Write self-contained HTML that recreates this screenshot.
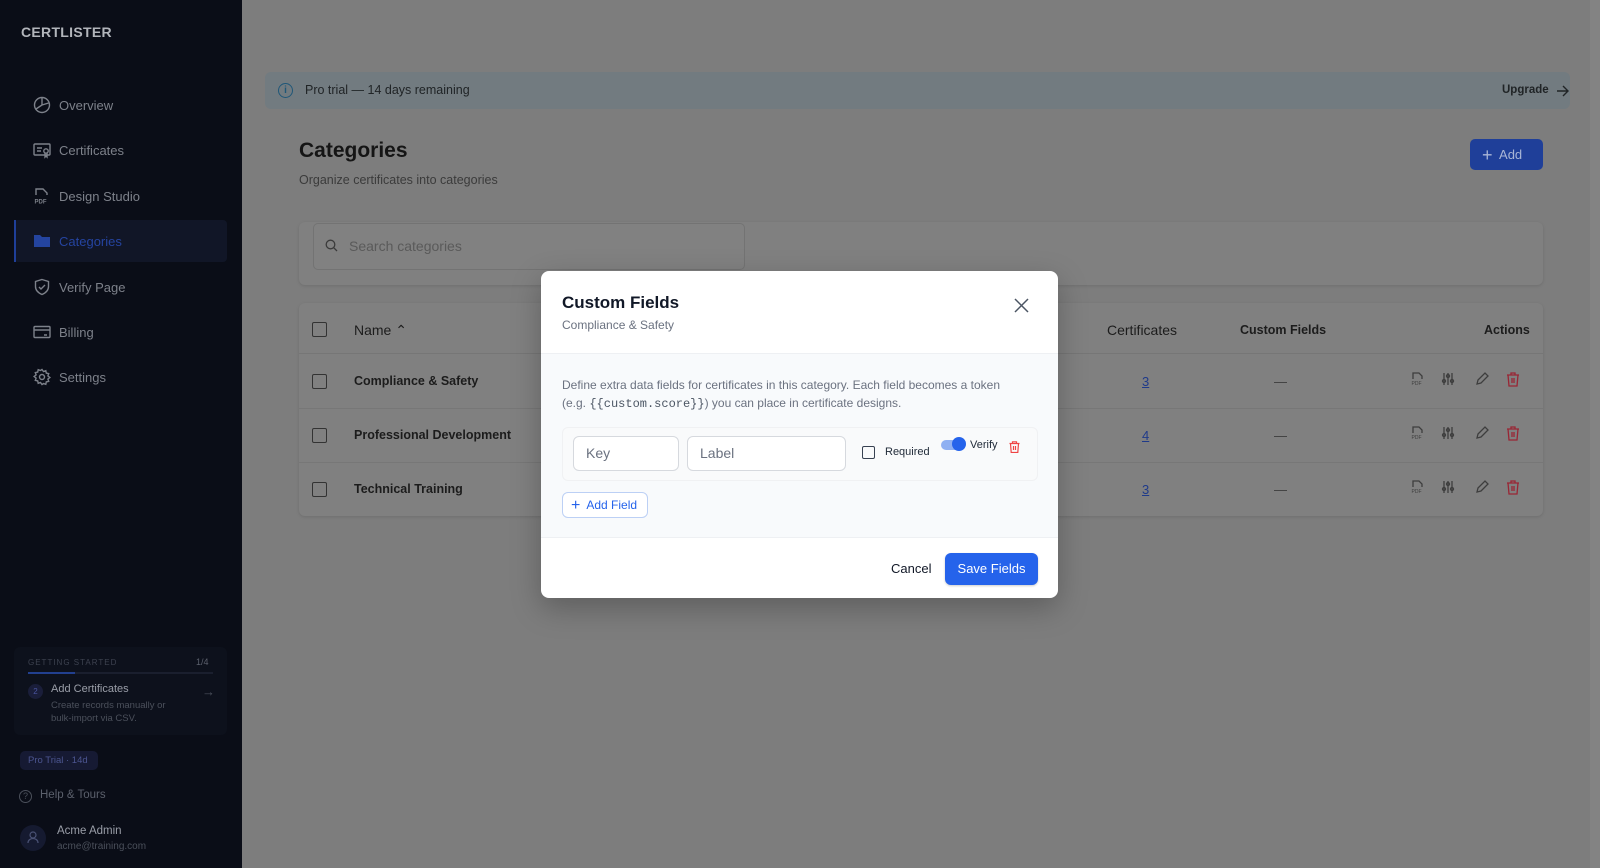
<!DOCTYPE html>
<html><head><meta charset="utf-8">
<style>
*{box-sizing:border-box;margin:0;padding:0}
body{width:1600px;height:868px;overflow:hidden;font-family:"Liberation Sans",Arial,sans-serif;background:#7d7d7d;position:relative}
.abs{position:absolute}
.sb{left:0;top:0;width:242px;height:868px;background:#0a0d17}
.nav{position:absolute;left:33px;height:20px;display:flex;align-items:center;color:#7d818a;font-size:13px}
.nav svg{width:18px;height:18px;margin-right:8px;stroke:#7d818a;fill:none;stroke-width:1.4}
.t{white-space:nowrap}
.cb{position:absolute;width:15px;height:15px;border:1.5px solid #333;border-radius:2px}
</style></head><body>
<div class="abs sb"></div>
<div class="abs t" style="left:21px;top:24px;font-size:14px;font-weight:bold;color:#b2b5bb;letter-spacing:.3px">CERTLISTER</div>

<div class="abs" style="left:14px;top:220px;width:213px;height:42px;background:#111627;border-radius:4px"></div>
<div class="abs" style="left:14px;top:220px;width:2px;height:42px;background:#1f3f99"></div>

<div class="nav" style="top:95px"><svg viewBox="0 0 18 18"><circle cx="9" cy="9" r="7.5"/><path d="M9 1.5V9L3 13M9 9l6.5-2"/></svg>Overview</div>
<div class="nav" style="top:140px"><svg viewBox="0 0 18 18"><rect x="1" y="3" width="16" height="11" rx="1"/><path d="M4 7h5M4 10h4"/><circle cx="13" cy="10" r="2.2"/><path d="M12 12v4l1-1 1 1v-4"/></svg>Certificates</div>
<div class="nav" style="top:186px"><svg viewBox="0 0 18 18"><path d="M3 8V2h7l4 4v2"/><text x="1.5" y="16.5" font-size="6" fill="#7d818a" stroke="none" font-family="Liberation Sans" font-weight="bold">PDF</text></svg>Design Studio</div>
<div class="nav" style="top:231px;color:#2544a0"><svg viewBox="0 0 18 18" style="stroke:none;fill:#24449f"><path d="M1 3h6l2 2h8v10H1z"/></svg>Categories</div>
<div class="nav" style="top:277px"><svg viewBox="0 0 18 18"><path d="M9 1.5l6.5 2v5c0 4-3 6.5-6.5 8-3.5-1.5-6.5-4-6.5-8v-5z"/><path d="M6 9l2 2 4-4"/></svg>Verify Page</div>
<div class="nav" style="top:322px"><svg viewBox="0 0 18 18"><rect x="1" y="3.5" width="16" height="11" rx="1"/><path d="M1 7h16M11 12h3"/></svg>Billing</div>
<div class="nav" style="top:367px"><svg viewBox="0 0 18 18"><circle cx="9" cy="9" r="2.5"/><path d="M9 1.5l1.5 2 2.3-.8.5 2.4 2.4.5-.8 2.3 2 1.6-2 1.6.8 2.3-2.4.5-.5 2.4-2.3-.8L9 16.5l-1.5-2-2.3.8-.5-2.4-2.4-.5.8-2.3-2-1.6 2-1.6-.8-2.3 2.4-.5.5-2.4 2.300.8z"/></svg>Settings</div>

<div class="abs" style="left:14px;top:647px;width:213px;height:88px;background:#0d111c;border-radius:6px"></div>
<div class="abs t" style="left:28px;top:658px;font-size:8px;letter-spacing:1px;color:#3d4250">GETTING STARTED</div>
<div class="abs t" style="left:196px;top:657px;font-size:9px;color:#5b606c">1/4</div>
<div class="abs" style="left:28px;top:672px;width:185px;height:2px;background:#1a1f2e"></div>
<div class="abs" style="left:28px;top:672px;width:47px;height:2px;background:#22408f"></div>
<div class="abs" style="left:28px;top:684px;width:15px;height:15px;border-radius:50%;background:#1a1e3a;color:#4a55a0;font-size:8px;text-align:center;line-height:15px">2</div>
<div class="abs t" style="left:51px;top:683px;font-size:11px;color:#9a9ea8">Add Certificates</div>
<div class="abs t" style="left:51px;top:699px;font-size:9.5px;color:#4b505b;line-height:13px">Create records manually or<br>bulk-import via CSV.</div>
<div class="abs t" style="left:202px;top:684px;font-size:13px;color:#4b505b">→</div>
<div class="abs t" style="left:20px;top:751px;width:78px;height:19px;border-radius:5px;background:#161a33;color:#4c5590;font-size:9.5px;line-height:19px;padding-left:8px">Pro Trial · 14d</div>
<div class="abs" style="left:19px;top:790px;width:13px;height:13px;border:1.2px solid #4b505b;border-radius:50%;font-size:9px;color:#4b505b;text-align:center;line-height:11px">?</div>
<div class="abs t" style="left:40px;top:789px;font-size:11.5px;color:#5b606c">Help &amp; Tours</div>
<div class="abs" style="left:20px;top:825px;width:26px;height:26px;border-radius:50%;background:#151a30"></div>
<svg class="abs" style="left:27px;top:831px" width="12" height="13" viewBox="0 0 12 13" fill="none" stroke="#4a5275" stroke-width="1.2"><circle cx="6" cy="4" r="3"/><path d="M1 12c0-3 2.5-4.5 5-4.5s5 1.5 5 4.5"/></svg>
<div class="abs t" style="left:57px;top:825px;font-size:11.5px;color:#9a9ea8">Acme Admin</div>
<div class="abs t" style="left:57px;top:841px;font-size:10px;color:#4b505b">acme@training.com</div>

<!-- main -->
<div class="abs" style="left:1590px;top:0;width:10px;height:868px;background:#838383"></div>
<div class="abs" style="left:265px;top:72px;width:1305px;height:37px;background:#727b80;border-radius:6px"></div>
<div class="abs" style="left:278px;top:83px;width:15px;height:15px;border:1.4px solid #1f5778;border-radius:50%;color:#1f5778;font-size:10px;text-align:center;line-height:13px;font-weight:bold">i</div>
<div class="abs t" style="left:305px;top:83px;font-size:12.5px;color:#202426">Pro trial — 14 days remaining</div>
<div class="abs t" style="left:1502px;top:84px;font-size:11.5px;color:#202426;font-weight:bold">Upgrade</div>
<svg class="abs" style="left:1556px;top:85px" width="13" height="12" fill="none" stroke="#202426" stroke-width="1.4"><path d="M1 6h11M7 1l5 5-5 5"/></svg>

<div class="abs t" style="left:299px;top:139px;font-size:21px;font-weight:bold;color:#151515">Categories</div>
<div class="abs t" style="left:299px;top:173px;font-size:12.5px;color:#3b3b3b">Organize certificates into categories</div>
<div class="abs t" style="left:1470px;top:139px;width:73px;height:31px;background:#1f3f99;border-radius:5px;color:#a9b6d6;font-size:13px;line-height:31px;padding-left:12px"><span style="font-size:18px;vertical-align:-2px">+</span>&nbsp; Add</div>

<div class="abs" style="left:299px;top:222px;width:1244px;height:63px;background:#808080;border-radius:6px;box-shadow:0 1px 3px rgba(0,0,0,.12)"></div>
<div class="abs" style="left:313px;top:223px;width:432px;height:47px;border:1px solid #737373;border-radius:5px;background:#818181"></div>
<svg class="abs" style="left:325px;top:239px" width="13" height="13" fill="none" stroke="#3b3b3b" stroke-width="1.3"><circle cx="5.5" cy="5.5" r="4.3"/><path d="M8.7 8.7L12 12"/></svg>
<div class="abs t" style="left:349px;top:238px;font-size:14px;color:#5a5a5a">Search categories</div>

<div class="abs" style="left:299px;top:303px;width:1244px;height:213px;background:#808080;border-radius:6px;box-shadow:0 1px 3px rgba(0,0,0,.12)"></div>
<div class="abs" style="left:299px;top:353px;width:1244px;height:1px;background:#767676"></div>
<div class="abs" style="left:299px;top:408px;width:1244px;height:1px;background:#777"></div>
<div class="abs" style="left:299px;top:462px;width:1244px;height:1px;background:#777"></div>
<div class="cb" style="left:312px;top:322px"></div>
<div class="abs t" style="left:354px;top:322px;font-size:14px;color:#1c1c1c">Name ⌃</div>
<div class="abs t" style="left:1107px;top:322px;font-size:14px;color:#1c1c1c">Certificates</div>
<div class="abs t" style="left:1240px;top:323px;font-size:12.5px;color:#1c1c1c;font-weight:bold">Custom Fields</div>
<div class="abs t" style="left:1484px;top:323px;font-size:12.5px;color:#1c1c1c;font-weight:bold">Actions</div>

<div class="cb" style="left:312px;top:374px"></div>
<div class="abs t" style="left:354px;top:374px;font-size:12.5px;color:#1c1c1c;font-weight:bold">Compliance &amp; Safety</div>
<div class="cb" style="left:312px;top:428px"></div>
<div class="abs t" style="left:354px;top:428px;font-size:12.5px;color:#1c1c1c;font-weight:bold">Professional Development</div>
<div class="cb" style="left:312px;top:482px"></div>
<div class="abs t" style="left:354px;top:482px;font-size:12.5px;color:#1c1c1c;font-weight:bold">Technical Training</div>

<div class="abs t" style="left:1142px;top:374px;font-size:13px;color:#1f3a8a;text-decoration:underline">3</div>
<div class="abs t" style="left:1142px;top:428px;font-size:13px;color:#1f3a8a;text-decoration:underline">4</div>
<div class="abs t" style="left:1142px;top:482px;font-size:13px;color:#1f3a8a;text-decoration:underline">3</div>
<div class="abs t" style="left:1274px;top:374px;font-size:13px;color:#3b3b3b">—</div>
<div class="abs t" style="left:1274px;top:428px;font-size:13px;color:#3b3b3b">—</div>
<div class="abs t" style="left:1274px;top:482px;font-size:13px;color:#3b3b3b">—</div>

<svg class="abs" style="left:1410px;top:372px" width="120" height="130" fill="none" stroke-width="1.3">
 <g id="r"><path d="M3 7V1h6l3 3v3" stroke="#3e3e3e"/><text x="1.5" y="13" font-size="5" fill="#3e3e3e" font-family="Liberation Sans">PDF</text>
 <path d="M34 1v12M38 1v12M42 1v12" stroke="#3e3e3e"/><circle cx="34" cy="9" r="1.5" stroke="#3e3e3e"/><circle cx="38" cy="4" r="1.5" stroke="#3e3e3e"/><circle cx="42" cy="9" r="1.5" stroke="#3e3e3e"/>
 <path d="M67 12l1-4 7-7 3 3-7 7z" stroke="#3e3e3e"/>
 <path d="M97 3h12M101 3V1h4v2M98 3l1 11h8l1-11M102 6v5M104 6v5" stroke="#992534"/></g>
 <use href="#r" y="54"/><use href="#r" y="108"/>
</svg>

<!-- modal -->
<div class="abs" style="left:541px;top:271px;width:517px;height:327px;background:#fff;border-radius:8px;overflow:hidden;box-shadow:0 10px 30px rgba(0,0,0,.25)">
 <div class="abs" style="left:0;top:82px;width:517px;height:185px;background:#f8fafc;border-top:1px solid #eef0f3;border-bottom:1px solid #eef0f3"></div>
 <div class="abs t" style="left:21px;top:22px;font-size:17px;font-weight:bold;color:#111827">Custom Fields</div>
 <div class="abs t" style="left:21px;top:47px;font-size:12px;color:#6b7280">Compliance &amp; Safety</div>
 <svg class="abs" style="left:473px;top:27px" width="15" height="15" stroke="#4b5563" stroke-width="1.5"><path d="M1 1l13 13M14 1L1 14"/></svg>
 <div class="abs t" style="left:21px;top:106px;font-size:12px;color:#6b7280;line-height:17.5px">Define extra data fields for certificates in this category. Each field becomes a token<br>(e.g. <span style="font-family:'Liberation Mono',monospace;color:#4b5563;font-size:12px">{{custom.score}}</span>) you can place in certificate designs.</div>
 <div class="abs" style="left:21px;top:156px;width:476px;height:54px;background:#f9fafb;border:1px solid #f0f1f3;border-radius:6px"></div>
 <div class="abs t" style="left:32px;top:165px;width:106px;height:35px;border:1px solid #d6d9de;border-radius:6px;background:#fff;font-size:14px;color:#6b7280;line-height:33px;padding-left:12px">Key</div>
 <div class="abs t" style="left:146px;top:165px;width:159px;height:35px;border:1px solid #d6d9de;border-radius:6px;background:#fff;font-size:14px;color:#6b7280;line-height:33px;padding-left:12px">Label</div>
 <div class="abs" style="left:321px;top:175px;width:13px;height:13px;border:1.5px solid #374151;border-radius:2px"></div>
 <div class="abs t" style="left:344px;top:175px;font-size:11px;color:#1f2937">Required</div>
 <div class="abs" style="left:400px;top:169px;width:24px;height:10px;border-radius:5px;background:#8fb0f2"></div>
 <div class="abs" style="left:411px;top:166px;width:14px;height:14px;border-radius:50%;background:#2563eb"></div>
 <div class="abs t" style="left:429px;top:168px;font-size:11px;color:#1f2937">Verify</div>
 <svg class="abs" style="left:468px;top:170px" width="11" height="12" fill="none" stroke="#ef4444" stroke-width="1.2"><path d="M0.5 2.5h10M3.5 2.5V.8h4v1.7M1.5 2.5l.7 9h6.6l.7-9M4.5 5v4M6.5 5v4"/></svg>
 <div class="abs t" style="left:21px;top:221px;width:86px;height:26px;border:1px solid #bcd0f5;border-radius:6px;background:#fff;color:#2563eb;font-size:12px;line-height:24px;padding-left:8px"><span style="font-size:16px;vertical-align:-1px">+</span>&nbsp; Add Field</div>
 <div class="abs t" style="left:350px;top:290px;font-size:13px;color:#111827">Cancel</div>
 <div class="abs t" style="left:404px;top:282px;width:93px;height:32px;border-radius:6px;background:#2563eb;color:#fff;font-size:13px;line-height:32px;text-align:center;box-shadow:0 1px 2px rgba(0,0,0,.2)">Save Fields</div>
</div>
</body></html>
